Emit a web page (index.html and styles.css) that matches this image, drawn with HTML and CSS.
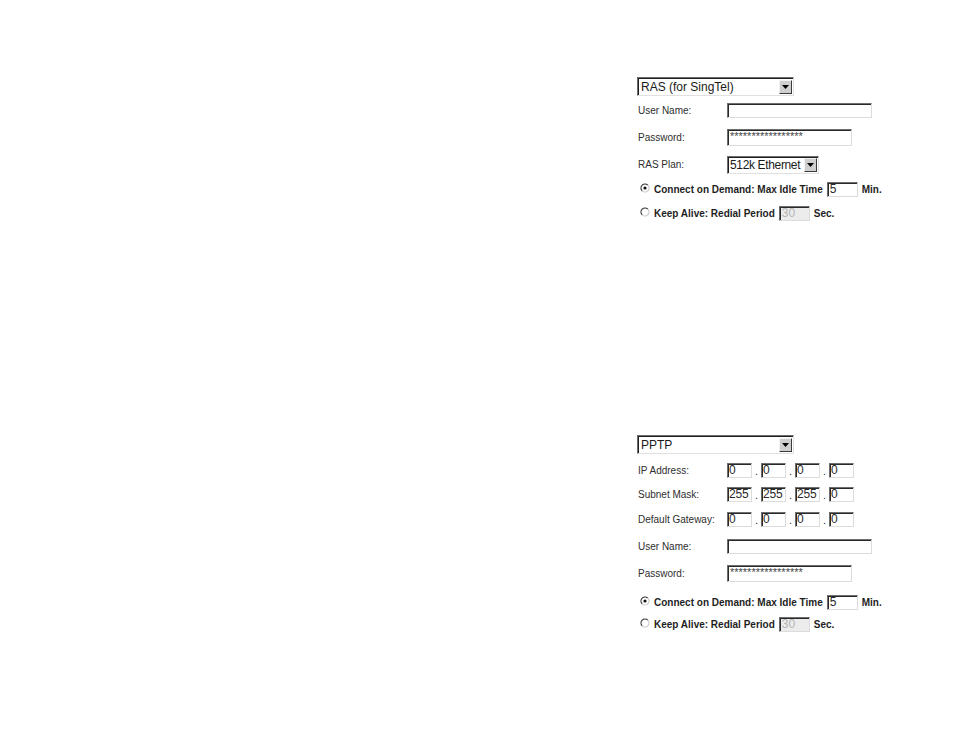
FILE: index.html
```html
<!DOCTYPE html>
<html>
<head>
<meta charset="utf-8">
<link rel="stylesheet" href="styles.css">
</head>
<body>
<div class="page">
  <section class="panel panel-ras">
    <div class="select select-type">
      <span class="select-text">RAS (for SingTel)</span>
      <span class="select-btn"><svg width="7" height="4" viewBox="0 0 7 4"><path d="M0 0H7L3.5 4Z" fill="#000"/></svg></span>
    </div>
    <div class="row"><span class="label">User Name:</span><span class="field field-user"></span></div>
    <div class="row"><span class="label">Password:</span><span class="field field-pass"><span class="stars">*****************</span></span></div>
    <div class="row"><span class="label">RAS Plan:</span>
      <div class="select select-plan">
        <span class="select-text">512k Ethernet</span>
        <span class="select-btn"><svg width="7" height="4" viewBox="0 0 7 4"><path d="M0 0H7L3.5 4Z" fill="#000"/></svg></span>
      </div>
    </div>
    <div class="radio-row">
      <svg class="radio" width="10" height="10" viewBox="0 0 10 10"><path d="M2.17 7.83A4 4 0 0 1 7.83 2.17" fill="none" stroke="#3a3a3a" stroke-width="1.2"/><path d="M7.83 2.17A4 4 0 0 1 2.17 7.83" fill="none" stroke="#c8c8c8" stroke-width="1.2"/><circle cx="5" cy="5" r="1.6" fill="#111"/></svg>
      <span class="bold">Connect on Demand: Max Idle Time</span>
      <span class="field field-small"><span class="val">5</span></span>
      <span class="bold">Min.</span>
    </div>
    <div class="radio-row radio-second">
      <svg class="radio" width="10" height="10" viewBox="0 0 10 10"><path d="M2.17 7.83A4 4 0 0 1 7.83 2.17" fill="none" stroke="#3a3a3a" stroke-width="1.2"/><path d="M7.83 2.17A4 4 0 0 1 2.17 7.83" fill="none" stroke="#c8c8c8" stroke-width="1.2"/></svg>
      <span class="bold">Keep Alive: Redial Period</span>
      <span class="field field-small field-disabled"><span class="val">30</span></span>
      <span class="bold">Sec.</span>
    </div>
  </section>

  <section class="panel panel-pptp">
    <div class="select select-type">
      <span class="select-text">PPTP</span>
      <span class="select-btn"><svg width="7" height="4" viewBox="0 0 7 4"><path d="M0 0H7L3.5 4Z" fill="#000"/></svg></span>
    </div>
    <div class="row row-short row-first"><span class="label">IP Address:</span>
      <div class="ip">
        <span class="field field-ip"><span class="val">0</span></span><span class="dot">.</span>
        <span class="field field-ip"><span class="val">0</span></span><span class="dot">.</span>
        <span class="field field-ip"><span class="val">0</span></span><span class="dot">.</span>
        <span class="field field-ip"><span class="val">0</span></span>
      </div>
    </div>
    <div class="row row-short"><span class="label">Subnet Mask:</span>
      <div class="ip">
        <span class="field field-ip"><span class="val">255</span></span><span class="dot">.</span>
        <span class="field field-ip"><span class="val">255</span></span><span class="dot">.</span>
        <span class="field field-ip"><span class="val">255</span></span><span class="dot">.</span>
        <span class="field field-ip"><span class="val">0</span></span>
      </div>
    </div>
    <div class="row"><span class="label">Default Gateway:</span>
      <div class="ip">
        <span class="field field-ip"><span class="val">0</span></span><span class="dot">.</span>
        <span class="field field-ip"><span class="val">0</span></span><span class="dot">.</span>
        <span class="field field-ip"><span class="val">0</span></span><span class="dot">.</span>
        <span class="field field-ip"><span class="val">0</span></span>
      </div>
    </div>
    <div class="row"><span class="label">User Name:</span><span class="field field-user"></span></div>
    <div class="row"><span class="label">Password:</span><span class="field field-pass"><span class="stars">*****************</span></span></div>
    <div class="radio-row radio-gap">
      <svg class="radio" width="10" height="10" viewBox="0 0 10 10"><path d="M2.17 7.83A4 4 0 0 1 7.83 2.17" fill="none" stroke="#3a3a3a" stroke-width="1.2"/><path d="M7.83 2.17A4 4 0 0 1 2.17 7.83" fill="none" stroke="#c8c8c8" stroke-width="1.2"/><circle cx="5" cy="5" r="1.6" fill="#111"/></svg>
      <span class="bold">Connect on Demand: Max Idle Time</span>
      <span class="field field-small"><span class="val">5</span></span>
      <span class="bold">Min.</span>
    </div>
    <div class="radio-row">
      <svg class="radio" width="10" height="10" viewBox="0 0 10 10"><path d="M2.17 7.83A4 4 0 0 1 7.83 2.17" fill="none" stroke="#3a3a3a" stroke-width="1.2"/><path d="M7.83 2.17A4 4 0 0 1 2.17 7.83" fill="none" stroke="#c8c8c8" stroke-width="1.2"/></svg>
      <span class="bold">Keep Alive: Redial Period</span>
      <span class="field field-small field-disabled"><span class="val">30</span></span>
      <span class="bold">Sec.</span>
    </div>
  </section>
</div>
</body>
</html>
```

FILE: styles.css
```css
html, body {
  margin: 0;
  padding: 0;
  background: #fff;
}
body {
  font-family: "Liberation Sans", Arial, sans-serif;
  color: #2a2a2a;
}
.page {
  padding: 77px 0 0 637px;
}
.panel {
  display: flex;
  flex-direction: column;
  width: 260px;
}
.panel-pptp {
  margin-top: 211px;
}

/* select boxes */
.select {
  box-sizing: border-box;
  display: flex;
  align-items: center;
  justify-content: space-between;
  height: 19px;
  background: #fff;
  border: 1px solid;
  border-color: #6e6e6e #e0e0e0 #e0e0e0 #6e6e6e;
  box-shadow: inset 1px 1px 0 #1e1e1e;
  padding: 0 1px 0 3px;
}
.select-type {
  width: 157px;
  margin-bottom: 1px;
}
.select-plan {
  width: 92px;
  height: 18px;
  padding-left: 2px;
}
.select-plan .select-text {
  letter-spacing: -0.35px;
}
.select-text {
  font-size: 12px;
  line-height: 14px;
  color: #1a1a1a;
  white-space: nowrap;
  padding-top: 1px;
}
.select-btn {
  box-sizing: border-box;
  flex: none;
  width: 13px;
  height: 14px;
  margin-top: 1px;
  background: #cfcfcf;
  border: 1px solid;
  border-color: #f2f2f2 #3a3a3a #3a3a3a #f2f2f2;
  display: flex;
  align-items: center;
  justify-content: center;
}

/* rows */
.row {
  display: flex;
  align-items: center;
  height: 27px;
}
.row-short {
  height: 24px;
}
.row-first {
  margin-top: 3px;
}
.label {
  width: 90px;
  flex: none;
  font-size: 10px;
  color: #2e2e2e;
  padding-left: 1px;
  box-sizing: border-box;
  white-space: nowrap;
}

/* inputs */
.field {
  box-sizing: border-box;
  display: flex;
  align-items: center;
  background: #fff;
  border: 1px solid;
  border-color: #6e6e6e #dcdcdc #dcdcdc #6e6e6e;
  box-shadow: inset 1px 1px 0 #2a2a2a;
  height: 15px;
  overflow: hidden;
}
.field-user {
  width: 145px;
}
.field-pass {
  width: 125px;
  height: 17px;
  align-items: flex-start;
}
.stars {
  font-size: 11px;
  line-height: 11px;
  color: #444;
  padding: 1px 0 0 2px;
  white-space: nowrap;
}
.field-small {
  width: 31px;
}
.field-ip {
  width: 25px;
}
.field-ip .val {
  padding-left: 1px;
  letter-spacing: -0.2px;
}
.val {
  font-size: 12px;
  line-height: 13px;
  color: #2a2a2a;
  padding-left: 2px;
  white-space: nowrap;
}
.field-disabled {
  background: #ececec;
}
.field-disabled .val {
  color: #b4b4b4;
}
.ip {
  display: flex;
  align-items: center;
}
.dot {
  width: 9px;
  text-align: center;
  font-size: 11px;
  line-height: 15px;
  padding-top: 2px;
  color: #333;
}

/* radio rows */
.radio-row {
  display: flex;
  align-items: center;
  height: 22px;
  padding-left: 3px;
}
.radio-second {
  margin-top: 2px;
}
.radio-gap {
  margin-top: 4px;
}
.radio {
  flex: none;
  margin-right: 4px;
  margin-top: -2px;
}
.bold {
  font-size: 10px;
  font-weight: bold;
  color: #1e1e1e;
  white-space: nowrap;
}
.radio-row .field {
  margin: 0 4px;
}
```
